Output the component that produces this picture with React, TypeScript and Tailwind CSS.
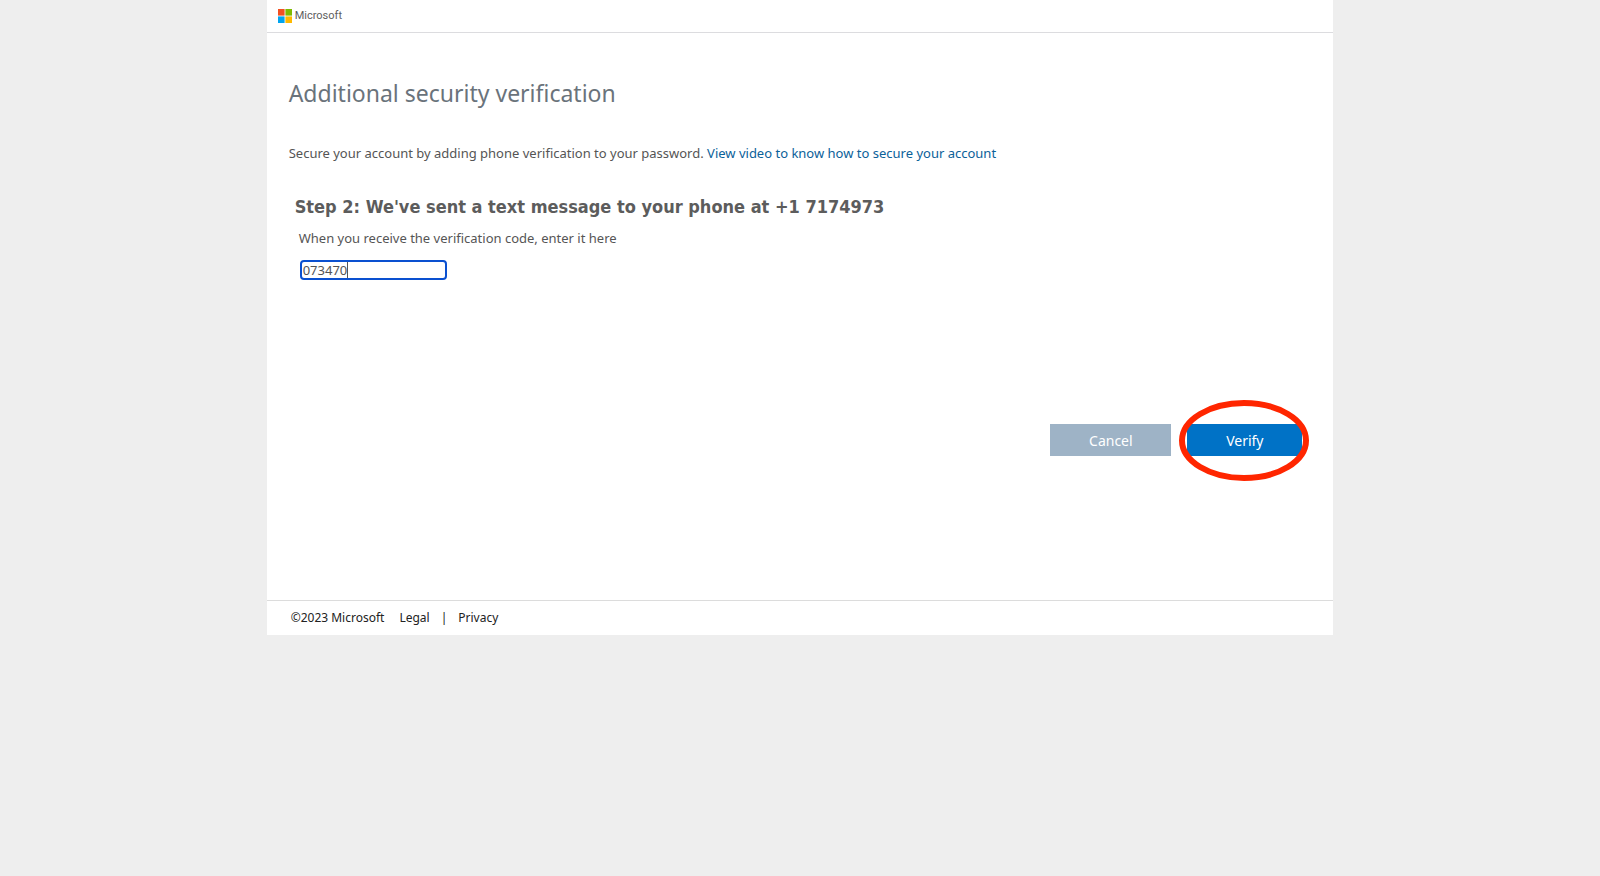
import { useState } from "react";

function MicrosoftLogo() {
  return (
    <svg className="size-[14px]" viewBox="0 0 14 14" aria-hidden="true">
      <rect x="0" y="0" width="6.6" height="6.6" fill="#f25022" />
      <rect x="7.4" y="0" width="6.6" height="6.6" fill="#7fba00" />
      <rect x="0" y="7.4" width="6.6" height="6.6" fill="#00a4ef" />
      <rect x="7.4" y="7.4" width="6.6" height="6.6" fill="#ffb900" />
    </svg>
  );
}

function Header() {
  return (
    <header className="flex h-[33px] items-center gap-[3px] border-b border-[#dcdcdf] px-[11px] pb-px">
      <MicrosoftLogo />
      <span className="font-[Roboto,sans-serif] text-[11px] leading-4 text-[#5e5e5e]">Microsoft</span>
    </header>
  );
}

function CodeField() {
  const [code, setCode] = useState("073470");
  const [touched, setTouched] = useState(false);
  return (
    <div className="flex flex-col items-start gap-3 pl-1">
      <label htmlFor="code" className="text-[13px] leading-5">
        When you receive the verification code, enter it here
      </label>
      <div className="relative ml-px">
        <input
          id="code"
          type="text"
          value={code}
          onFocus={() => setTouched(true)}
          onChange={(e) => setCode(e.target.value)}
          className="block h-5 w-[147px] rounded-[4px] border-2 border-[#0a50d0] bg-white px-px text-[13px] leading-4 outline-none"
        />
        {!touched && <span className="absolute top-[2px] left-[47px] h-4 w-px bg-[#555555]" />}
      </div>
    </div>
  );
}

function Actions() {
  return (
    <div className="flex justify-end gap-4 pr-[31px]">
      <button type="button" className="h-8 w-[121px] bg-[#9eb3c6] text-[14px] text-white">
        Cancel
      </button>
      <div className="relative">
        <button type="submit" className="h-8 w-[115px] bg-[#0072c6] text-[14px] text-white">
          Verify
        </button>
        <svg
          className="pointer-events-none absolute -top-6 -left-2 h-[81px] w-[131px]"
          viewBox="0 0 131 81"
          aria-hidden="true"
        >
          <ellipse cx="65" cy="40.5" rx="62" ry="37.5" fill="none" stroke="#ff2600" strokeWidth="6" />
        </svg>
      </div>
    </div>
  );
}

function Footer() {
  return (
    <footer className="flex items-center gap-[11px] border-t border-[#dcdcdc] px-6 py-2 text-[12px] leading-[18px] text-[#222222]">
      <span className="mr-1">©2023 Microsoft</span>
      <a href="#legal">Legal</a>
      <span>|</span>
      <a href="#privacy">Privacy</a>
    </footer>
  );
}

export default function App() {
  return (
    <div className="min-h-screen bg-[#eeeeee] font-['Noto_Sans',sans-serif] text-[#555555]">
      <div className="mx-auto w-2/3 bg-white">
        <Header />
        <main className="pt-11 pb-36">
          <div className="pl-[22px]">
            <h1 className="text-[23px] leading-8 text-[#6a737b]">Additional security verification</h1>
            <p className="mt-[34px] text-[13px] leading-5">
              Secure your account by adding phone verification to your password.{" "}
              <a href="#video" className="text-[#0b6199]">
                View video to know how to secure your account
              </a>
            </p>
          </div>
          <form className="pt-8" onSubmit={(e) => e.preventDefault()}>
            <div className="flex flex-col gap-[9px] pl-7">
              <h2 className="font-['DejaVu_Sans_Condensed','DejaVu_Sans',sans-serif] text-[18px] leading-6 font-bold text-[#5c5c5c]">
                Step 2: We've sent a text message to your phone at +1 7174973
              </h2>
              <CodeField />
            </div>
            <div className="pt-36">
              <Actions />
            </div>
          </form>
        </main>
        <Footer />
      </div>
    </div>
  );
}
